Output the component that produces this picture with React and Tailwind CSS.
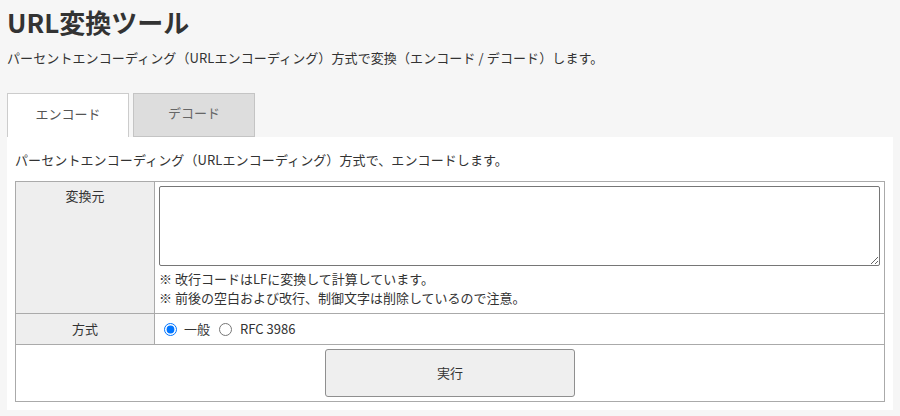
import React, { useState } from "react";

const font = { fontFamily: '"Noto Sans CJK JP", "Noto Sans", sans-serif' };

function Tabs({ active, setActive }) {
    return (
        <div className="flex items-end h-[44px]">
            <button
                onClick={() => setActive("encode")}
                className={`w-[122px] h-[44px] border border-b-0 text-[13px] leading-[20px] pb-[4px] ${active === "encode" ? "bg-white border-[#cccccc] text-[#555555]" : "bg-[#dddddd] border-[#c4c4c4] text-[#666666]"}`}
            >
                エンコード
            </button>
            <button
                onClick={() => setActive("decode")}
                className={`ml-[4px] w-[122px] h-[44px] border text-[13px] leading-[20px] pb-[4px] ${active === "decode" ? "bg-white border-[#cccccc] border-b-0 text-[#555555]" : "bg-[#dddddd] border-[#c4c4c4] text-[#666666]"}`}
            >
                デコード
            </button>
        </div>
    );
}

export default function App() {
    const [active, setActive] = useState("encode");
    const [text, setText] = useState("");

    return (
        <div className="bg-[#f6f6f6] w-[900px] h-[416px] px-[7px] text-[#333333] overflow-hidden" style={font}>
            {/* Header */}
            <h1 className="mt-[4px] font-bold text-[26px] leading-[36px] text-[#333333]">URL変換ツール</h1>
            <p className="mt-[8px] text-[13px] leading-[20px] tracking-[0.1px]">
                パーセントエンコーディング（URLエンコーディング）方式で変換（エンコード / デコード）します。
            </p>

            <div className="mt-[25px]">
                <Tabs active={active} setActive={setActive} />

                {/* Panel */}
                <div className="bg-white pt-[13px] px-2 pb-2">
                    <p className="mb-[11px] text-[13px] leading-[20px] tracking-[0.1px]">
                        パーセントエンコーディング（URLエンコーディング）方式で、エンコードします。
                    </p>
                    <table className="w-full border-collapse text-[13px]">
                        <tbody>
                            <tr>
                                <th className="w-[139px] bg-[#eeeeee] border border-[#aaaaaa] p-[4px] align-top font-normal leading-[20px]">
                                    変換元
                                </th>
                                <td className="border border-[#aaaaaa] p-[4px] pb-[6px]">
                                    <textarea
                                        value={text}
                                        onChange={(e) => setText(e.target.value)}
                                        className="block w-full h-[80px] border border-[#767676] rounded-[2px]"
                                    />
                                    <div className="mt-[3px] leading-[19px]">
                                        <p>※ 改行コードはLFに変換して計算しています。</p>
                                        <p>※ 前後の空白および改行、制御文字は削除しているので注意。</p>
                                    </div>
                                </td>
                            </tr>
                            <tr>
                                <th className="bg-[#eeeeee] border border-[#aaaaaa] px-[4px] py-0 h-[31px] font-normal leading-[22px]">
                                    方式
                                </th>
                                <td className="border border-[#aaaaaa] px-[4px] py-0 h-[31px]">
                                    <div className="flex items-center h-[22px]">
                                        <label className="flex items-center">
                                            <input type="radio" name="mode" defaultChecked className="m-0 ml-[5px] w-[13px] h-[13px]" />
                                            <span className="ml-[7px]">一般</span>
                                        </label>
                                        <label className="flex items-center ml-[5px]">
                                            <input type="radio" name="mode" className="m-0 ml-[4px] w-[13px] h-[13px]" />
                                            <span className="ml-[8px]">RFC 3986</span>
                                        </label>
                                    </div>
                                </td>
                            </tr>
                            <tr>
                                <td colSpan={2} className="border border-[#aaaaaa] p-[4px] text-center">
                                    <button className="w-[250px] h-[48px] bg-[#efefef] border border-[#8f8f8f] rounded-[3px] text-[13px] align-top">
                                        実行
                                    </button>
                                </td>
                            </tr>
                        </tbody>
                    </table>
                </div>
            </div>
        </div>
    );
}
